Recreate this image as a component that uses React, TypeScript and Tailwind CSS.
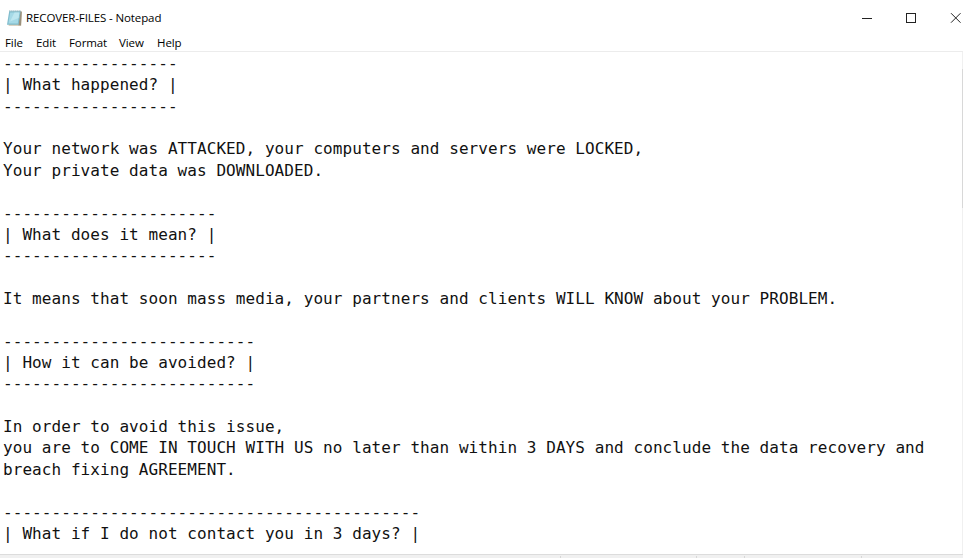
const NOTE = `------------------
| What happened? |
------------------

Your network was ATTACKED, your computers and servers were LOCKED,
Your private data was DOWNLOADED.

----------------------
| What does it mean? |
----------------------

It means that soon mass media, your partners and clients WILL KNOW about your PROBLEM.

--------------------------
| How it can be avoided? |
--------------------------

In order to avoid this issue,
you are to COME IN TOUCH WITH US no later than within 3 DAYS and conclude the data recovery and
breach fixing AGREEMENT.

-------------------------------------------
| What if I do not contact you in 3 days? |`;

const MENU = [
  { label: "File", width: "w-[31px]" },
  { label: "Edit", width: "w-[33px]" },
  { label: "Format", width: "w-[50px]" },
  { label: "View", width: "w-[38px]" },
  { label: "Help", width: "w-[30px]" },
];

function NotepadIcon() {
  return (
    <svg width="16" height="18" viewBox="0 0 16 18" className="shrink-0">
      <path d="M3 3 L14.8 2.6 L14.2 16.8 L1.6 16.8 Z" fill="#cfc4ae" />
      <path d="M13.2 2.3 L14.8 2.8 L14 16.6 L11.2 16.2 Z" fill="#9b907c" />
      <path d="M2.2 2.2 L13.6 2.2 L11.6 15.8 L0 15.8 Z" fill="#7fbccd" />
      <path d="M3.2 3.4 L12.4 3.4 L10.8 14.6 L1.4 14.6 Z" fill="#a5d9e6" />
      <path d="M7.5 3.4 L12.4 3.4 L11.6 9 L3 12.5 Z" fill="#bde6ef" />
      <path d="M2.4 1.9H13.6" stroke="#6a97a3" strokeWidth="1" strokeDasharray="1 1" />
    </svg>
  );
}

function TitleBar() {
  return (
    <header className="flex h-[34px] shrink-0 items-center pt-[2px] pl-[7px]">
      <NotepadIcon />
      <h1 className="ml-[3px] text-[11.5px] leading-4 tracking-[-0.11px] whitespace-nowrap">RECOVER-FILES - Notepad</h1>
      <div className="ml-auto flex items-center text-[#222]">
        <svg width="101" height="12" viewBox="0 0 101 12" fill="none" stroke="currentColor">
          <path d="M0 6.5H10" />
          <rect x="44.5" y="1.5" width="9" height="9" />
          <path d="M89 1.2L98.5 10.7M98.5 1.2L89 10.7" />
        </svg>
      </div>
    </header>
  );
}

export default function App() {
  return (
    <div className="flex h-[558px] w-[963px] flex-col overflow-hidden bg-white font-['Open_Sans','Noto_Sans',sans-serif] text-black">
      <TitleBar />
      <nav className="flex h-[17px] shrink-0 items-center pl-[5px] text-[11.5px] leading-4 tracking-[-0.1px]">
        {MENU.map((item) => (
          <span key={item.label} className={item.width}>{item.label}</span>
        ))}
      </nav>
      <main className="flex min-h-0 flex-1 border-t border-[#ececec]">
        <pre className="m-0 min-w-0 flex-1 overflow-hidden pt-[1px] pl-[3px] font-['DejaVu_Sans_Mono',monospace] text-[16px] leading-[21.36px] tracking-[0.067px] text-[#111]">{NOTE}</pre>
        <div className="w-px bg-[#f0f0f0] pt-[17px]">
          <div className="h-[139px] bg-[#d8d8d8]" />
        </div>
      </main>
      <footer className="flex h-[4px] shrink-0 border-t border-[#dcdcdc] bg-[#f0f0f0] pt-px">
        <span className="w-[561px] border-r border-[#d7d7d7]" />
        <span className="w-[136px] border-r border-[#d7d7d7]" />
        <span className="w-[48px] border-r border-[#d7d7d7]" />
        <span className="w-[117px] border-r border-[#d7d7d7]" />
      </footer>
    </div>
  );
}
